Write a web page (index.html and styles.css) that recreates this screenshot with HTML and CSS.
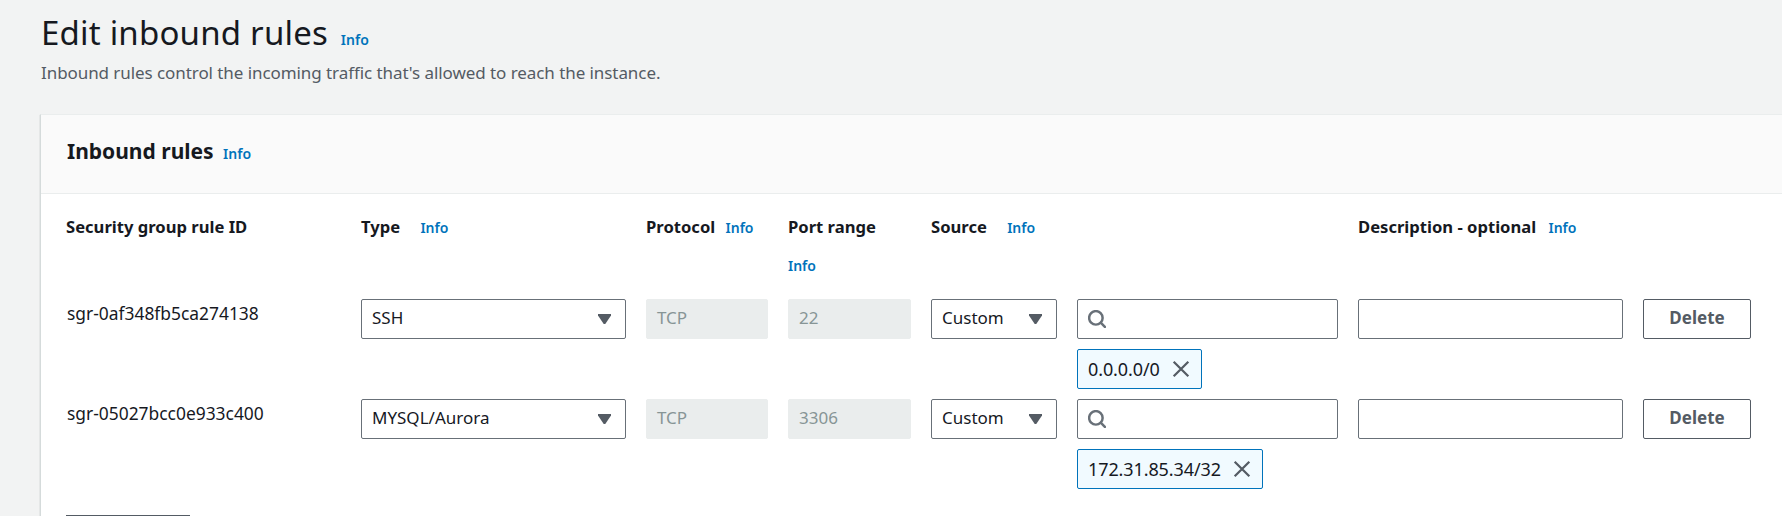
FILE: index.html
```html
<!DOCTYPE html>
<html lang="en">
<head>
    <meta charset="UTF-8">
    <meta name="viewport" content="width=device-width, initial-scale=1.0">
    <title>Edit inbound rules</title>
    <link rel="stylesheet" href="styles.css">
</head>
<body>
    <div class="page-head">
        <h1>Edit inbound rules <a class="info">Info</a></h1>
        <p>Inbound rules control the incoming traffic that's allowed to reach the instance.</p>
    </div>

    <div class="card">
        <div class="card-head">
            <h2>Inbound rules <a class="info">Info</a></h2>
        </div>
        <div class="card-body">
            <div class="grid labels">
                <div class="label">Security group rule ID</div>
                <div class="label">Type <a class="info gap-l">Info</a></div>
                <div class="label">Protocol <a class="info">Info</a></div>
                <div class="label">Port range <a class="info block">Info</a></div>
                <div class="label">Source <a class="info gap-m">Info</a></div>
                <div></div>
                <div class="label">Description - optional <a class="info gap-s">Info</a></div>
                <div></div>
            </div>

            <div class="grid rule">
                <div class="rule-id">sgr-0af348fb5ca274138</div>
                <div class="select">SSH<span class="caret"></span></div>
                <div class="field off">TCP</div>
                <div class="field off">22</div>
                <div class="select">Custom<span class="caret"></span></div>
                <div>
                    <div class="field search">
                        <svg width="18" height="18" viewBox="0 0 16 16"><circle cx="7" cy="7" r="6" /><path d="M11.5 11.5L15 15" /></svg>
                    </div>
                    <span class="token">0.0.0.0/0
                        <svg width="18" height="18" viewBox="0 0 16 16"><path d="M1.5 1.5L14.5 14.5M14.5 1.5L1.5 14.5" /></svg>
                    </span>
                </div>
                <div class="field"></div>
                <button class="btn">Delete</button>
            </div>

            <div class="grid rule">
                <div class="rule-id">sgr-05027bcc0e933c400</div>
                <div class="select">MYSQL/Aurora<span class="caret"></span></div>
                <div class="field off">TCP</div>
                <div class="field off">3306</div>
                <div class="select">Custom<span class="caret"></span></div>
                <div>
                    <div class="field search">
                        <svg width="18" height="18" viewBox="0 0 16 16"><circle cx="7" cy="7" r="6" /><path d="M11.5 11.5L15 15" /></svg>
                    </div>
                    <span class="token">172.31.85.34/32
                        <svg width="18" height="18" viewBox="0 0 16 16"><path d="M1.5 1.5L14.5 14.5M14.5 1.5L1.5 14.5" /></svg>
                    </span>
                </div>
                <div class="field"></div>
                <button class="btn">Delete</button>
            </div>

            <div class="add"></div>
        </div>
    </div>
</body>
</html>
```

FILE: styles.css
```css
*{
    margin: 0px;
    padding: 0px;
    box-sizing: border-box;
}
html, body{
    height: 516px;
    overflow: hidden;
}
body{
    background: #f2f3f3;
    color: #16191f;
    font-family: "Noto Sans", sans-serif;
    font-size: 17px;
}
.page-head{
    padding: 13px 0 0 41px;
    height: 114px;
}
h1{
    font-size: 33px;
    line-height: 40px;
    font-weight: 400;
    letter-spacing: 0.2px;
}
.page-head p{
    margin-top: 1px;
    font-size: 17px;
    line-height: 24px;
    color: #545b64;
    letter-spacing: -0.07px;
}
.info{
    color: #0073bb;
    font-size: 14px;
    font-weight: 600;
    letter-spacing: 0;
    margin-left: 4px;
}
.block{
    display: block;
    margin: 19px 0 0 0;
    line-height: 20px;
}
.card{
    margin-left: 40px;
    background: #ffffff;
    border-left: 1px solid #d5dbdb;
    border-top: 1px solid #eaeded;
    height: 402px;
    box-shadow: 0 1px 1px rgba(0,28,36,0.3);
}
.card-head{
    height: 79px;
    padding: 22px 0 0 26px;
    background: #fafafa;
    border-bottom: 1px solid #eaeded;
}
h2{
    font-size: 21px;
    line-height: 28px;
    font-weight: 700;
}
.card-body{
    padding: 23px 0 0 25px;
}
.grid{
    display: grid;
    grid-template-columns: 275px 265px 122px 123px 126px 261px 265px 108px;
    column-gap: 20px;
}
.labels{
    height: 82px;
}
.label{
    font-size: 16.6px;
    font-weight: 700;
    line-height: 20px;
}
.label .info{
    margin-left: 6px;
}
.label .gap-l, .label .gap-m{
    margin-left: 16px;
}
.label .gap-s{
    margin-left: 8px;
}
.label .block{
    margin-left: 0;
}
.rule{
    height: 100px;
    align-items: start;
}
.rule-id{
    padding: 3px 0 0 1px;
    font-size: 17.4px;
    line-height: 22px;
}
.select, .field{
    position: relative;
    height: 40px;
    padding: 0 10px;
    border: 1px solid #687078;
    border-radius: 2px;
    background: #ffffff;
    line-height: 36px;
}
.field.off{
    border-color: #eaeded;
    background: #eaeded;
    color: #879596;
}
.caret{
    position: absolute;
    right: 14px;
    top: 14px;
    width: 13px;
    height: 10px;
    background: #545b64;
    clip-path: polygon(0 0, 100% 0, 100% 15%, 56% 100%, 44% 100%, 0 15%);
}
.search{
    display: flex;
    align-items: center;
}
.search svg{
    fill: none;
    stroke: #687078;
    stroke-width: 2.2;
    stroke-linecap: round;
}
.token{
    display: inline-flex;
    align-items: center;
    gap: 12px;
    height: 40px;
    margin-top: 10px;
    padding: 0 11px 0 10px;
    border: 1px solid #0073bb;
    border-radius: 2px;
    background: #f1faff;
    font-size: 18px;
    letter-spacing: -0.1px;
}
.token svg{
    fill: none;
    stroke: #545b64;
    stroke-width: 2;
}
.btn{
    height: 40px;
    padding-bottom: 3px;
    border: 1px solid #545b64;
    border-radius: 2px;
    background: #ffffff;
    color: #545b64;
    font-family: inherit;
    font-size: 17px;
    font-weight: 700;
}
/* the next button is only just showing at the bottom edge */
.add{
    width: 124px;
    height: 1px;
    margin-top: 16px;
    background: #545b64;
}
```
